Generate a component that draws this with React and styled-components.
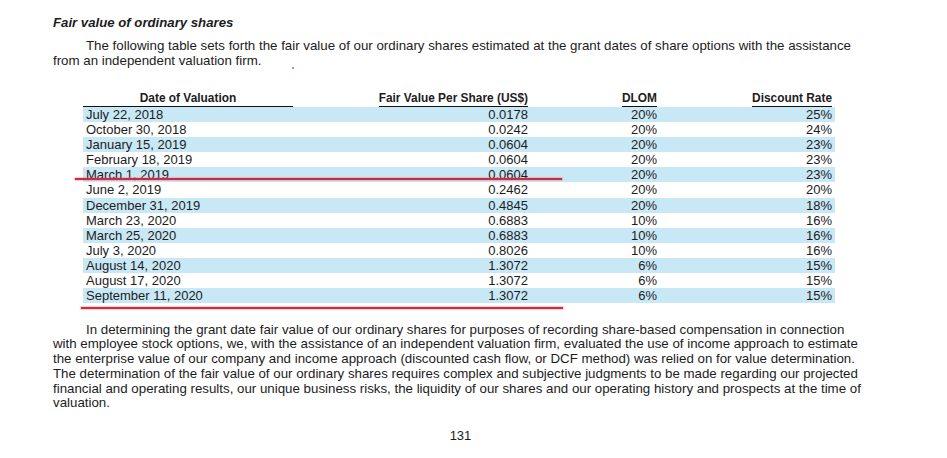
import React from 'react';
import styled, { createGlobalStyle } from 'styled-components';

const GlobalStyle = createGlobalStyle`
  html, body {
    margin: 0;
    padding: 0;
    background: #ffffff;
  }
  body {
    font-family: "Liberation Sans", Arial, sans-serif;
    color: #1c1c22;
  }
`;

const rows = [
  ['July 22, 2018', '0.0178', '20%', '25%'],
  ['October 30, 2018', '0.0242', '20%', '24%'],
  ['January 15, 2019', '0.0604', '20%', '23%'],
  ['February 18, 2019', '0.0604', '20%', '23%'],
  ['March 1, 2019', '0.0604', '20%', '23%'],
  ['June 2, 2019', '0.2462', '20%', '20%'],
  ['December 31, 2019', '0.4845', '20%', '18%'],
  ['March 23, 2020', '0.6883', '10%', '16%'],
  ['March 25, 2020', '0.6883', '10%', '16%'],
  ['July 3, 2020', '0.8026', '10%', '16%'],
  ['August 14, 2020', '1.3072', '6%', '15%'],
  ['August 17, 2020', '1.3072', '6%', '15%'],
  ['September 11, 2020', '1.3072', '6%', '15%'],
];

const Page = styled.div`
  position: relative;
  width: 947px;
  height: 458px;
  padding: 15px 0 0 53px;
  box-sizing: border-box;
  overflow: hidden;
`;

const Title = styled.h2`
  margin: 0;
  font-size: 13.2px;
  line-height: 16px;
  font-weight: 700;
  font-style: italic;
`;

const Para = styled.p`
  margin: ${p => p.$top}px 0 0;
  font-size: 13.3px;
  line-height: ${p => p.$lh}px;
  white-space: nowrap;
`;

const Indent = styled.span`
  display: inline-block;
  width: 33px;
`;

const Speck = styled.span`
  position: absolute;
  left: 292px;
  top: 67px;
  width: 2px;
  height: 2px;
  background: #b85a5a;
  opacity: 0.7;
`;

const Table = styled.div`
  position: relative;
  margin: 23px 0 0 30px;
  width: 752px;
  display: grid;
  grid-template-columns: 210px 235px 129px 175px 3px;
`;

const Head = styled.div`
  display: flex;
  justify-content: ${p => (p.$center ? 'center' : 'flex-end')};
  font-size: 11.9px;
  font-weight: 700;
  line-height: 14px;
`;

const HeadLabel = styled.span`
  display: block;
  padding-bottom: 1px;
  border-bottom: 1px solid #111;
  ${p => p.$full && 'flex: 1; text-align: center;'}
`;

const Cell = styled.div`
  height: 15.1px;
  font-size: 13px;
  line-height: 15.1px;
  white-space: nowrap;
  background: ${p => (p.$band ? '#c8e8f6' : 'transparent')};
  text-align: ${p => (p.$left ? 'left' : 'right')};
  padding-left: ${p => (p.$left ? '3px' : '0')};
`;

const Mark = styled.div`
  position: absolute;
  left: ${p => p.$x}px;
  top: ${p => p.$y}px;
  width: ${p => p.$w}px;
  height: 2px;
  background: #d12a3f;
  box-shadow: 0 0 1px 0.6px rgba(230, 80, 100, 0.5);
`;

const PageNo = styled.div`
  margin: 17px 0 0 -53px;
  width: 921px;
  text-align: center;
  font-size: 13px;
  line-height: 15px;
`;

export default function App() {
  return (
    <Page>
      <GlobalStyle />
      <Title>Fair value of ordinary shares</Title>
      <Para $top={7} $lh={15}>
        <Indent />The following table sets forth the fair value of our ordinary shares estimated at the grant dates of share options with the assistance
        <br />
        from an independent valuation firm.
      </Para>
      <Speck />

      <Table>
        <Head $center>
          <HeadLabel $full>Date of Valuation</HeadLabel>
        </Head>
        <Head>
          <HeadLabel>Fair Value Per Share (US$)</HeadLabel>
        </Head>
        <Head>
          <HeadLabel>DLOM</HeadLabel>
        </Head>
        <Head>
          <HeadLabel>Discount Rate</HeadLabel>
        </Head>
        <Head />
        {rows.map((r, i) => {
          const band = i % 2 === 0;
          return (
            <React.Fragment key={r[0]}>
              <Cell $band={band} $left>{r[0]}</Cell>
              <Cell $band={band}>{r[1]}</Cell>
              <Cell $band={band}>{r[2]}</Cell>
              <Cell $band={band}>{r[3]}</Cell>
              <Cell $band={band} />
            </React.Fragment>
          );
        })}
        <Mark $x={-8} $y={87} $w={487} />
        <Mark $x={-2} $y={215.5} $w={482} />
      </Table>

      <Para $top={19.5} $lh={14.7}>
        <Indent />In determining the grant date fair value of our ordinary shares for purposes of recording share-based compensation in connection
        <br />
        with employee stock options, we, with the assistance of an independent valuation firm, evaluated the use of income approach to estimate
        <br />
        the enterprise value of our company and income approach (discounted cash flow, or DCF method) was relied on for value determination.
        <br />
        The determination of the fair value of our ordinary shares requires complex and subjective judgments to be made regarding our projected
        <br />
        financial and operating results, our unique business risks, the liquidity of our shares and our operating history and prospects at the time of
        <br />
        valuation.
      </Para>

      <PageNo>131</PageNo>
    </Page>
  );
}
